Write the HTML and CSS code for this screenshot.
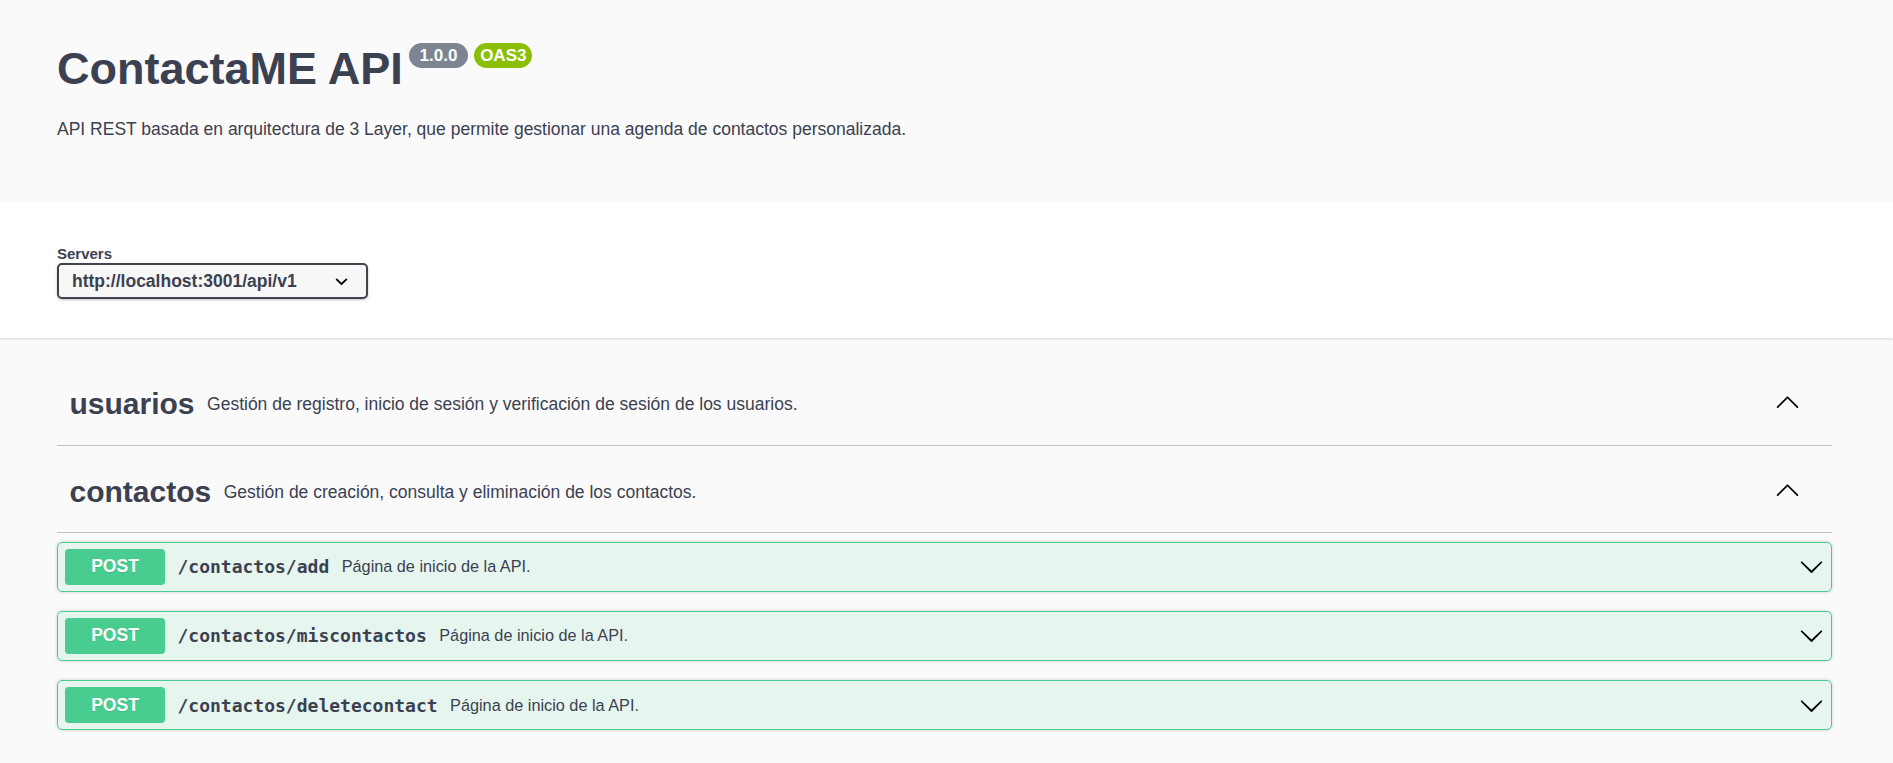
FILE: index.html
```html
<!DOCTYPE html>
<html lang="es">
<head>
<meta charset="utf-8">
<title>ContactaME API</title>
<link rel="stylesheet" href="styles.css">
</head>
<body>
<div class="page">
  <section class="info wrap">
    <div class="title-row">
      <h2 class="title">ContactaME API</h2>
      <span class="badge badge-version"> 1.0.0 </span>
      <span class="badge badge-oas">OAS3</span>
    </div>
    <p class="desc">API REST basada en arquitectura de 3 Layer, que permite gestionar una agenda de contactos personalizada.</p>
  </section>

  <section class="scheme">
    <div class="wrap">
      <div class="servers-title">Servers</div>
      <div class="select">
        <span class="select-text">http://localhost:3001/api/v1</span>
        <svg class="select-arrow" viewBox="0 0 20 20" width="25" height="25"><path d="M13.418 7.859a.695.695 0 01.978 0 .68.68 0 010 .969l-3.908 3.83a.697.697 0 01-.979 0l-3.908-3.830a.68.68 0 010-.969.695.695 0 01.978 0L10 11l3.418-3.141z"/></svg>
      </div>
    </div>
  </section>

  <section class="wrap tags">
    <div class="tag">
      <h3 class="tag-name">usuarios</h3>
      <span class="tag-desc">Gestión de registro, inicio de sesión y verificación de sesión de los usuarios.</span>
      <svg class="tag-arrow" viewBox="0 0 20 20" width="25" height="25"><path d="M17.418 14.908c.272.268.709.268.979 0s.271-.701 0-.969l-7.908-7.83c-.27-.268-.707-.268-.979 0l-7.908 7.83c-.27.268-.27.701 0 .969.271.268.709.268.979 0L10 7.592l7.418 7.316z"/></svg>
    </div>
    <div class="tag">
      <h3 class="tag-name">contactos</h3>
      <span class="tag-desc">Gestión de creación, consulta y eliminación de los contactos.</span>
      <svg class="tag-arrow" viewBox="0 0 20 20" width="25" height="25"><path d="M17.418 14.908c.272.268.709.268.979 0s.271-.701 0-.969l-7.908-7.83c-.27-.268-.707-.268-.979 0l-7.908 7.83c-.27.268-.27.701 0 .969.271.268.709.268.979 0L10 7.592l7.418 7.316z"/></svg>
    </div>
    <div class="ops">
      <div class="opblock">
        <span class="method">POST</span>
        <span class="path">/contactos/add</span>
        <span class="op-desc">Página de inicio de la API.</span>
        <svg class="op-arrow" viewBox="0 0 20 20" width="25" height="25"><path d="M17.418 6.109c.272-.268.709-.268.979 0s.271.701 0 .969l-7.908 7.83c-.27.268-.707.268-.979 0l-7.908-7.830c-.27-.268-.27-.701 0-.969.271-.268.709-.268.979 0L10 13.25l7.418-7.141z"/></svg>
      </div>
      <div class="opblock">
        <span class="method">POST</span>
        <span class="path">/contactos/miscontactos</span>
        <span class="op-desc">Página de inicio de la API.</span>
        <svg class="op-arrow" viewBox="0 0 20 20" width="25" height="25"><path d="M17.418 6.109c.272-.268.709-.268.979 0s.271.701 0 .969l-7.908 7.83c-.27.268-.707.268-.979 0l-7.908-7.830c-.27-.268-.27-.701 0-.969.271-.268.709-.268.979 0L10 13.25l7.418-7.141z"/></svg>
      </div>
      <div class="opblock">
        <span class="method">POST</span>
        <span class="path">/contactos/deletecontact</span>
        <span class="op-desc">Página de inicio de la API.</span>
        <svg class="op-arrow" viewBox="0 0 20 20" width="25" height="25"><path d="M17.418 6.109c.272-.268.709-.268.979 0s.271.701 0 .969l-7.908 7.83c-.27.268-.707.268-.979 0l-7.908-7.830c-.27-.268-.27-.701 0-.969.271-.268.709-.268.979 0L10 13.25l7.418-7.141z"/></svg>
      </div>
    </div>
  </section>
</div>
</body>
</html>
```

FILE: styles.css
```css
html, body {
  margin: 0;
  padding: 0;
  background: #fafafa;
}

body {
  font-family: "Liberation Sans", Arial, sans-serif;
  color: #3b4151;
}

.wrap {
  margin: 0 61px 0 57px;
}

/* ---------- info ---------- */
.info {
  padding-top: 43px;
}

.title-row {
  display: flex;
  align-items: flex-start;
}

.title {
  margin: 0;
  font-size: 45px;
  line-height: 52px;
  font-weight: 700;
  color: #3b4151;
}

.badge {
  display: inline-block;
  margin-left: 6px;
  padding: 2.5px 6px;
  border-radius: 57px;
  font-size: 17px;
  font-weight: 700;
  line-height: 20px;
  color: #fff;
  white-space: pre;
}

.badge-version {
  background: #7d8492;
}

.badge-oas {
  background: #89bf04;
}

.desc {
  margin: 24px 0 0;
  font-size: 17.5px;
  line-height: 20px;
  padding-bottom: 63px;
}

/* ---------- servers ---------- */
.scheme {
  background: #fff;
  box-shadow: 0 1px 2.5px 0 rgba(0, 0, 0, .15);
  padding: 43px 0 39px;
  margin-bottom: 26px;
}

.servers-title {
  font-size: 15px;
  line-height: 18px;
  font-weight: 700;
  color: #3b4151;
}

.select {
  box-sizing: border-box;
  width: 311px;
  height: 36px;
  display: flex;
  align-items: center;
  padding: 0 12.5px 0 13px;
  border: 2.5px solid #41444e;
  border-radius: 5px;
  background: #f7f7f7;
  box-shadow: 0 1px 2.5px 0 rgba(0, 0, 0, .25);
}

.select-text {
  flex: 1;
  font-size: 17.5px;
  font-weight: 700;
  color: #3b4151;
}

.select-arrow {
  fill: #000;
}

/* ---------- tags ---------- */
.tag {
  box-sizing: border-box;
  height: 81.5px;
  display: flex;
  align-items: center;
  padding: 0 32px 0 12.5px;
  border-bottom: 1px solid rgba(59, 65, 81, .3);
  margin-bottom: 6.25px;
}

.tag-name {
  margin: 0;
  font-size: 30px;
  font-weight: 700;
  color: #3b4151;
}

.tag-desc {
  flex: 1;
  padding: 0 12.5px;
  font-size: 17.5px;
  color: #3b4151;
}

.tag-arrow {
  fill: #000;
  margin-bottom: 5px;
}

/* ---------- operations ---------- */
.ops {
  padding-top: 2px;
}

.opblock {
  box-sizing: border-box;
  height: 50.25px;
  display: flex;
  align-items: center;
  padding: 0 7px;
  margin-bottom: 19px;
  border: 1px solid #49cc90;
  border-radius: 5px;
  background: rgba(73, 204, 144, .1);
  box-shadow: 0 0 3.75px rgba(0, 0, 0, .19);
}

.method {
  width: 100px;
  height: 36px;
  display: flex;
  align-items: center;
  justify-content: center;
  border-radius: 3.75px;
  background: #49cc90;
  color: #fff;
  font-size: 17.5px;
  font-weight: 700;
  text-shadow: 0 1px 0 rgba(0, 0, 0, .1);
}

.path {
  padding: 0 12.5px;
  font-family: "DejaVu Sans Mono", "Liberation Mono", monospace;
  font-size: 18px;
  font-weight: 700;
  color: #3b4151;
}

.op-desc {
  flex: 1;
  font-size: 16.25px;
  color: #3b4151;
}

.op-arrow {
  fill: #000;
}
```
